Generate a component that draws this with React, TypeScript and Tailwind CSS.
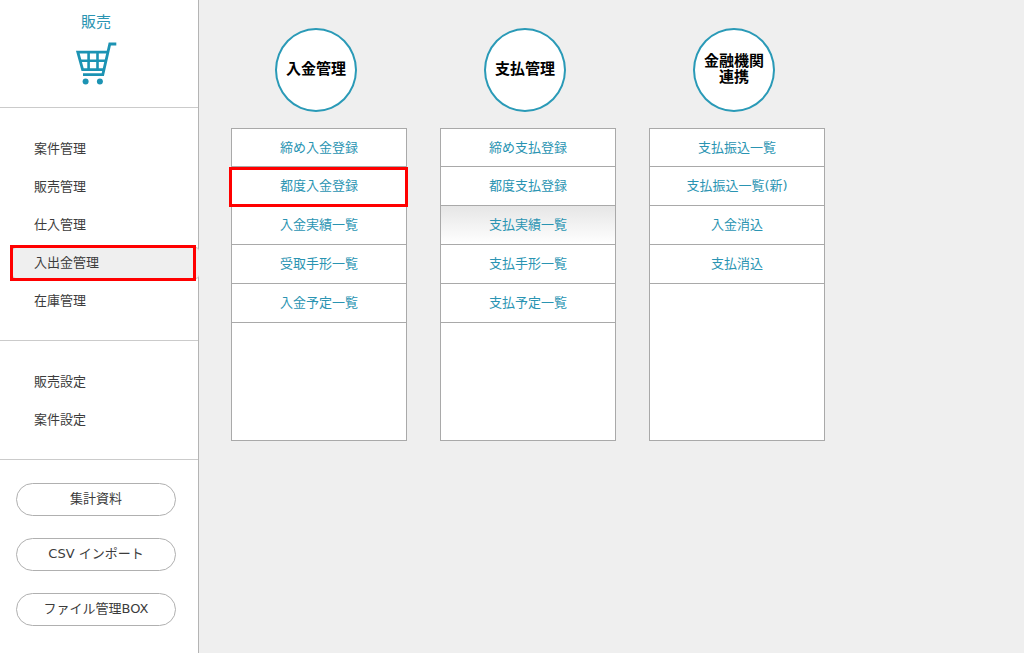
import React from 'react';
import clsx from 'clsx';

interface MenuLink {
  label: string;
  hovered?: boolean;
  marked?: boolean;
}

interface MenuColumn {
  title: string[];
  links: MenuLink[];
}

const managementItems = ['案件管理', '販売管理', '仕入管理', '入出金管理', '在庫管理'];
const settingItems = ['販売設定', '案件設定'];
const toolItems = ['集計資料', 'CSV インポート', 'ファイル管理BOX'];

const columns: MenuColumn[] = [
  {
    title: ['入金管理'],
    links: [
      { label: '締め入金登録' },
      { label: '都度入金登録', marked: true },
      { label: '入金実績一覧' },
      { label: '受取手形一覧' },
      { label: '入金予定一覧' }
    ]
  },
  {
    title: ['支払管理'],
    links: [
      { label: '締め支払登録' },
      { label: '都度支払登録' },
      { label: '支払実績一覧', hovered: true },
      { label: '支払手形一覧' },
      { label: '支払予定一覧' }
    ]
  },
  {
    title: ['金融機関', '連携'],
    links: [
      { label: '支払振込一覧' },
      { label: '支払振込一覧(新)' },
      { label: '入金消込' },
      { label: '支払消込' }
    ]
  }
];

const CartIcon: React.FC = () => (
  <svg className="h-[44px] w-[42px]" viewBox="75 42 42 44" fill="none" stroke="#1c93b3" aria-hidden="true">
    <path d="M116.3 44H109.8L102.8 74.6H83" strokeWidth="2.8" />
    <path d="M107.6 52.2H77.8L82.6 69.7H103.6" strokeWidth="2.8" />
    <path d="M80 60.7H105.5M88.6 52V69.5M97.5 52V69.5" strokeWidth="2.6" />
    <circle cx="85.6" cy="81.4" r="3" fill="#1c93b3" stroke="none" />
    <circle cx="99.9" cy="81.4" r="3" fill="#1c93b3" stroke="none" />
  </svg>
);

interface SideMenuProps {
  items: string[];
  active?: string;
}

const SideMenu: React.FC<SideMenuProps> = ({ items, active }) => (
  <ul className="flex flex-col gap-1.5 border-b border-[#cbcbcb] pt-[25px] pb-[23px]">
    {items.map((item) => (
      <li
        key={item}
        className={clsx(
          'relative ml-3 h-8',
          item === active && '-mr-px rounded border-y border-l border-[#c4c4c4] bg-[#efefef]'
        )}
      >
        <a href="#" className={clsx('flex h-full items-center', item === active ? 'pl-[21px]' : 'pl-[22px]')}>
          {item}
        </a>
        {item === active && (
          <span className="pointer-events-none absolute -top-[3px] right-[3px] -bottom-[3px] -left-[3px] border-3 border-[#ff0000]" />
        )}
      </li>
    ))}
  </ul>
);

const MenuPanel: React.FC<{ column: MenuColumn }> = ({ column }) => (
  <section className="w-[176px]">
    <h2 className="mb-4 ml-11 flex h-[84px] w-[82px] flex-col items-center justify-center rounded-[50%] border-2 border-[#2a9ab7] bg-white pb-1 font-['Noto_Sans_CJK_JP',sans-serif] text-[15px] leading-4 font-bold text-black">
      {column.title.map((line) => (
        <span key={line}>{line}</span>
      ))}
    </h2>
    <ul className="min-h-[313px] border border-[#a9a9a9] bg-white">
      {column.links.map((link) => (
        <li
          key={link.label}
          className={clsx(
            'relative h-[39px] border-b border-[#a9a9a9] first:h-[38px]',
            link.hovered && 'bg-linear-to-b from-[#e6e6e6] to-white'
          )}
        >
          <a href="#" className="flex h-full items-center justify-center text-[#2a94b2]">
            {link.label}
          </a>
          {link.marked && (
            <span className="pointer-events-none absolute top-0 -right-[2px] -bottom-[2px] -left-[3px] border-3 border-[#ff0000]" />
          )}
        </li>
      ))}
    </ul>
  </section>
);

const App: React.FC = () => {
  return (
    <div className="flex min-h-screen bg-[#efefef] font-['DejaVu_Sans','Noto_Sans_CJK_JP',sans-serif] text-[13px] leading-5 text-[#3c3c3c]">
      <aside className="w-[199px] shrink-0 border-r border-[#b4b4b4] bg-white">
        <header className="flex h-[108px] flex-col items-center border-b border-[#cbcbcb] pt-3 pr-1.5">
          <h1 className="mb-2.5 text-[15px] text-[#2a94b2]">販売</h1>
          <CartIcon />
        </header>
        <nav>
          <SideMenu items={managementItems} active="入出金管理" />
          <SideMenu items={settingItems} />
        </nav>
        <div className="flex flex-col gap-[22px] pt-[23px] pr-[22px] pb-6 pl-4">
          {toolItems.map((item) => (
            <button key={item} type="button" className="h-[33px] rounded-full border border-[#b0b0b0] bg-white pb-0.5">
              {item}
            </button>
          ))}
        </div>
      </aside>
      <main className="flex flex-1 flex-wrap content-start gap-[33px] pt-7 pl-8">
        {columns.map((column) => (
          <MenuPanel key={column.title.join('')} column={column} />
        ))}
      </main>
    </div>
  );
};

export default App;
